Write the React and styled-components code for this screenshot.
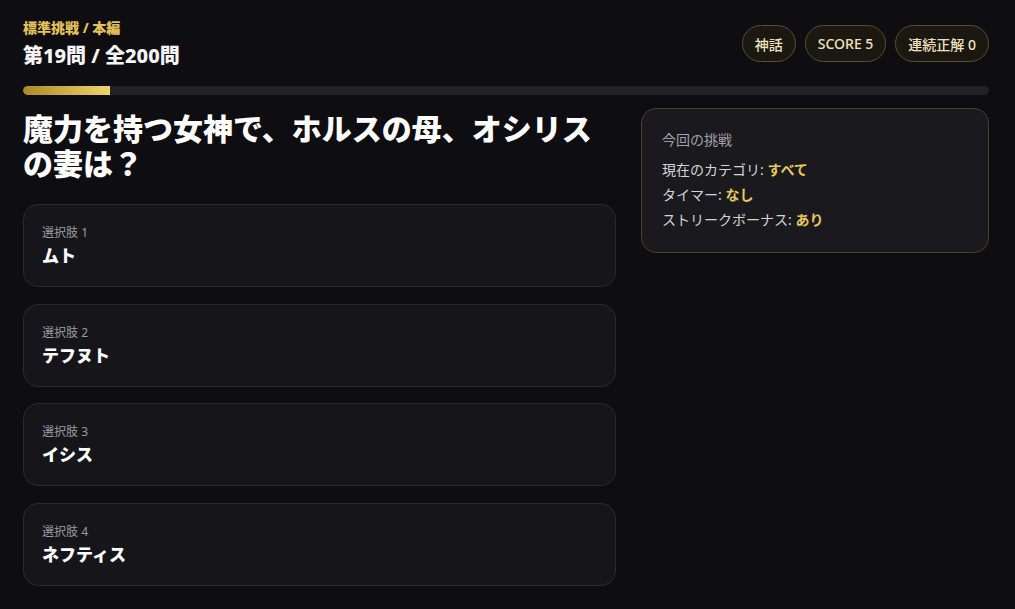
import React from 'react';
import styled, { createGlobalStyle } from 'styled-components';

const GlobalStyle = createGlobalStyle`
  html, body {
    margin: 0;
    padding: 0;
    background: #0e0e12;
    color: #f4f4f5;
    font-family: "Noto Sans", "Noto Sans CJK JP", sans-serif;
  }
  * { box-sizing: border-box; }
`;

const choices = ['ムト', 'テフヌト', 'イシス', 'ネフティス'];

export default function App() {
  const current = 18;
  const total = 200;
  return (
    <Page>
      <GlobalStyle />
      <Header>
        <div>
          <Mode>標準挑戦 / 本編</Mode>
          <Counter>第19問 / 全200問</Counter>
        </div>
        <Chips>
          <Chip>神話</Chip>
          <Chip>SCORE 5</Chip>
          <Chip>連続正解 0</Chip>
        </Chips>
      </Header>
      <Track>
        <Fill style={{ width: `${(current / total) * 100}%` }} />
      </Track>
      <Main>
        <section>
          <Question>魔力を持つ女神で、ホルスの母、オシリスの妻は？</Question>
          <ChoiceList>
            {choices.map((c, i) => (
              <ChoiceCard key={c}>
                <ChoiceLabel>選択肢 {i + 1}</ChoiceLabel>
                <ChoiceText>{c}</ChoiceText>
              </ChoiceCard>
            ))}
          </ChoiceList>
        </section>
        <Side>
          <SideTitle>今回の挑戦</SideTitle>
          <SideRow>現在のカテゴリ: <Accent>すべて</Accent></SideRow>
          <SideRow>タイマー: <Accent>なし</Accent></SideRow>
          <SideRow>ストリークボーナス: <Accent>あり</Accent></SideRow>
        </Side>
      </Main>
    </Page>
  );
}

const Page = styled.div`
  padding: 18px 26px 24px 23px;
  min-height: 100vh;
`;

const Header = styled.header`
  display: flex;
  justify-content: space-between;
  align-items: flex-start;
`;

const Mode = styled.div`
  font-size: 14px;
  font-weight: 800;
  color: #e3c15a;
  line-height: 20px;
`;

const Counter = styled.h1`
  margin: 5px 0 0;
  font-size: 20px;
  font-weight: 800;
  line-height: 26px;
  color: #f5f5f5;
`;

const Chips = styled.div`
  display: flex;
  gap: 9px;
  margin-top: 7px;
`;

const Chip = styled.span`
  display: inline-flex;
  align-items: center;
  height: 37px;
  padding: 0 12px;
  border-radius: 999px;
  border: 1px solid #5b4d29;
  background: #1b1812;
  color: #efe3bd;
  font-size: 14px;
  font-weight: 500;
`;

const Track = styled.div`
  margin-top: 17px;
  height: 9px;
  border-radius: 5px;
  background: #212126;
  overflow: hidden;
`;

const Fill = styled.div`
  height: 100%;
  border-radius: 5px 0 0 5px;
  background: linear-gradient(90deg, #ac8a26, #f0d46a);
`;

const Main = styled.main`
  display: grid;
  grid-template-columns: 593px 1fr;
  gap: 25px;
  margin-top: 13px;
  align-items: start;
`;

const Question = styled.h2`
  margin: 3px 0 0;
  font-size: 30px;
  font-weight: 800;
  line-height: 35px;
  color: #ffffff;
`;

const ChoiceList = styled.div`
  display: flex;
  flex-direction: column;
  gap: 16.6px;
  margin-top: 23px;
`;

const ChoiceCard = styled.div`
  height: 83px;
  padding: 19px 18px;
  border-radius: 15px;
  border: 1px solid #2a2a30;
  background: #16161a;
`;

const ChoiceLabel = styled.div`
  font-size: 12px;
  line-height: 18px;
  color: #9a9aa2;
`;

const ChoiceText = styled.div`
  margin-top: 2px;
  font-size: 17px;
  font-weight: 800;
  line-height: 24px;
  color: #ffffff;
`;

const Side = styled.aside`
  padding: 21px 20px 20px;
  border-radius: 15px;
  border: 1px solid #4a4128;
  background: #1a1a1e;
`;

const SideTitle = styled.div`
  font-size: 14px;
  line-height: 20px;
  color: #a1a1aa;
  margin-bottom: 7px;
`;

const SideRow = styled.div`
  font-size: 14px;
  line-height: 25px;
  color: #d4d4d8;
`;

const Accent = styled.span`
  color: #e8c75e;
  font-weight: 600;
`;
